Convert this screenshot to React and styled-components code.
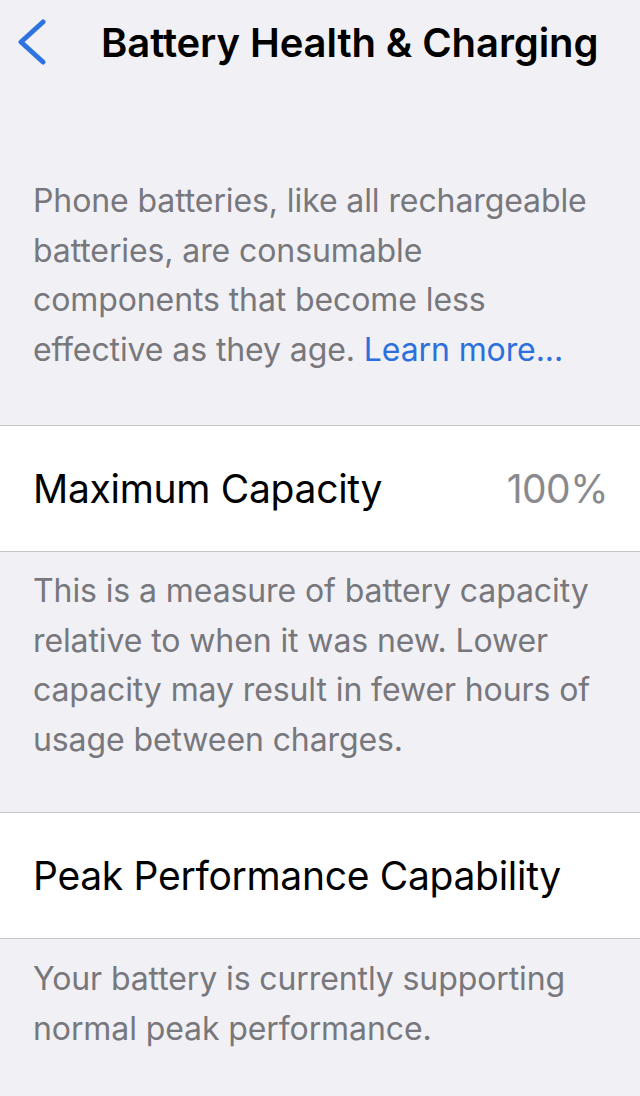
import React from "react";
import styled, { createGlobalStyle } from "styled-components";

const GlobalStyle = createGlobalStyle`
  html, body {
    margin: 0;
    padding: 0;
    background: #f0f0f5;
  }
  body {
    font-family: Inter, "Noto Sans", "Liberation Sans", sans-serif;
    -webkit-font-smoothing: antialiased;
  }
`;

const Screen = styled.div`
  width: 640px;
  min-height: 1096px;
  background: #f0f0f5;
  overflow: hidden;
`;

const Header = styled.div`
  display: flex;
  align-items: center;
  height: 84px;
  padding-left: 18px;
`;

const BackButton = styled.div`
  display: flex;
  align-items: center;
  width: 83px;
  height: 44px;
`;

const Title = styled.div`
  font-size: 40px;
  font-weight: 600;
  color: #000;
  letter-spacing: -0.1px;
  white-space: nowrap;
`;

const Footnote = styled.p`
  margin: 0;
  padding: ${(p) => p.$pad};
  font-size: 32px;
  line-height: 49.5px;
  color: #77777c;
  letter-spacing: -0.1px;
`;

const Link = styled.a`
  color: #2d6fdd;
  text-decoration: none;
`;

const Cell = styled.div`
  display: flex;
  align-items: center;
  justify-content: space-between;
  height: 125px;
  padding: 0 32px 0 33px;
  background: #fff;
  border-top: 1px solid #c6c6c9;
  border-bottom: 1px solid #c6c6c9;
`;

const Label = styled.div`
  font-size: 39px;
  color: #000;
  letter-spacing: -0.3px;
`;

const Value = styled.div`
  font-size: 39px;
  color: #8a8a8e;
  letter-spacing: -0.5px;
`;

const Chevron = () => (
  <svg width="30" height="46" viewBox="0 0 30 46" fill="none">
    <path
      d="M25 3 L3 23 L25 43"
      stroke="#2f73e0"
      strokeWidth="5"
      strokeLinecap="round"
      strokeLinejoin="round"
    />
  </svg>
);

export default function App() {
  return (
    <Screen>
      <GlobalStyle />
      <Header>
        <BackButton>
          <Chevron />
        </BackButton>
        <Title>Battery Health &amp; Charging</Title>
      </Header>
      <Footnote $pad="92px 28px 51px 33px">
        Phone batteries, like all rechargeable batteries, are consumable
        components that become less effective as they age.{" "}
        <Link>Learn more...</Link>
      </Footnote>
      <Cell>
        <Label>Maximum Capacity</Label>
        <Value>100%</Value>
      </Cell>
      <Footnote $pad="14px 28px 48px 33px">
        This is a measure of battery capacity relative to when it was new.
        Lower capacity may result in fewer hours of usage between charges.
      </Footnote>
      <Cell>
        <Label>Peak Performance Capability</Label>
      </Cell>
      <Footnote $pad="15px 28px 40px 33px">
        Your battery is currently supporting normal peak performance.
      </Footnote>
    </Screen>
  );
}
